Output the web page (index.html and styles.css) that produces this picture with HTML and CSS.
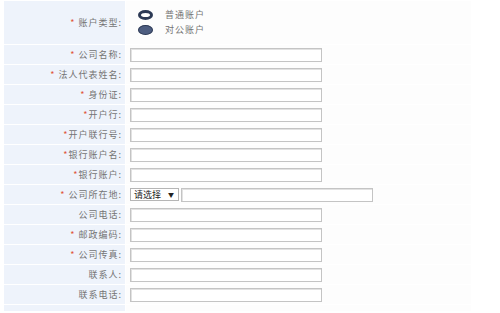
FILE: index.html
```html
<!DOCTYPE html>
<html lang="zh">
<head>
<meta charset="utf-8">
<link rel="stylesheet" href="styles.css">
</head>
<body>
<table class="form">
  <tr class="type-row">
    <th><span class="req">*</span> 账户类型:</th>
    <td>
      <div class="radios">
        <label class="radio"><span class="dot dot-off"></span><span>普通账户</span></label>
        <label class="radio"><span class="dot dot-on"></span><span>对公账户</span></label>
      </div>
    </td>
  </tr>
  <tr><th><span class="req">*</span> 公司名称:</th><td><span class="input"></span></td></tr>
  <tr><th><span class="req">*</span> 法人代表姓名:</th><td><span class="input"></span></td></tr>
  <tr><th><span class="req">*</span> 身份证:</th><td><span class="input"></span></td></tr>
  <tr><th><span class="req">*</span>开户行:</th><td><span class="input"></span></td></tr>
  <tr><th><span class="req">*</span>开户联行号:</th><td><span class="input"></span></td></tr>
  <tr><th><span class="req">*</span>银行账户名:</th><td><span class="input"></span></td></tr>
  <tr><th><span class="req">*</span>银行账户:</th><td><span class="input"></span></td></tr>
  <tr><th><span class="req">*</span> 公司所在地:</th><td><div class="loc"><span class="select"><span>请选择</span><span class="arrow">▼</span></span><span class="input"></span></div></td></tr>
  <tr><th>公司电话:</th><td><span class="input"></span></td></tr>
  <tr><th><span class="req">*</span> 邮政编码:</th><td><span class="input"></span></td></tr>
  <tr><th><span class="req">*</span> 公司传真:</th><td><span class="input"></span></td></tr>
  <tr><th>联系人:</th><td><span class="input"></span></td></tr>
  <tr><th>联系电话:</th><td><span class="input"></span></td></tr>
  <tr class="end-row"><th></th><td></td></tr>
</table>
</body>
</html>
```

FILE: styles.css
```css
html, body {
  margin: 0;
  padding: 0;
  background: #ffffff;
}
body {
  font-family: "Noto Sans CJK SC", "Noto Sans", sans-serif;
  font-size: 9px;
  color: #747474;
}
.form {
  margin-left: 3px;
  border-collapse: separate;
  border-spacing: 1px;
}
.form th {
  width: 121px;
  height: 19px;
  padding: 0 3px 0 0;
  box-sizing: border-box;
  background: #eef3fb;
  font-weight: normal;
  text-align: right;
  white-space: nowrap;
  line-height: 12px;
  letter-spacing: 1px;
  vertical-align: middle;
}
.form td {
  width: 345px;
  height: 19px;
  padding: 0 0 0 4px;
  box-sizing: border-box;
  background: #fdfdfd;
  vertical-align: middle;
}
.type-row th, .type-row td { height: 43px; }
.end-row th, .end-row td { height: 6px; }
.req { color: #e0533a; }
.input {
  display: block;
  width: 192px;
  height: 14px;
  box-sizing: border-box;
  background: #fff;
  border: 1px solid #c4c4c4;
  box-shadow: inset 1px 1px 0 #e2e2e2;
}
.radios {
  display: flex;
  flex-direction: column;
  gap: 5px;
  padding-left: 8px;
}
.radio {
  display: flex;
  align-items: center;
  gap: 12px;
  height: 10px;
  line-height: 10px;
  letter-spacing: 1px;
  color: #747474;
}
.dot {
  display: block;
  width: 15px;
  height: 10px;
  border-radius: 50%;
  box-sizing: border-box;
}
.dot-off {
  background: #fff;
  border: 3px solid #2c3955;
}
.dot-on {
  background: #4d5d80;
  border: 1px solid #2c3955;
}
.loc {
  display: flex;
  align-items: center;
  gap: 2px;
}
.select {
  display: flex;
  align-items: center;
  justify-content: space-between;
  width: 49px;
  height: 13px;
  box-sizing: border-box;
  padding: 0 4px 0 3px;
  border: 1px solid #b5b5b5;
  background: #fff;
  color: #222;
  line-height: 11px;
}
.arrow { font-size: 6px; color: #222; }
```
